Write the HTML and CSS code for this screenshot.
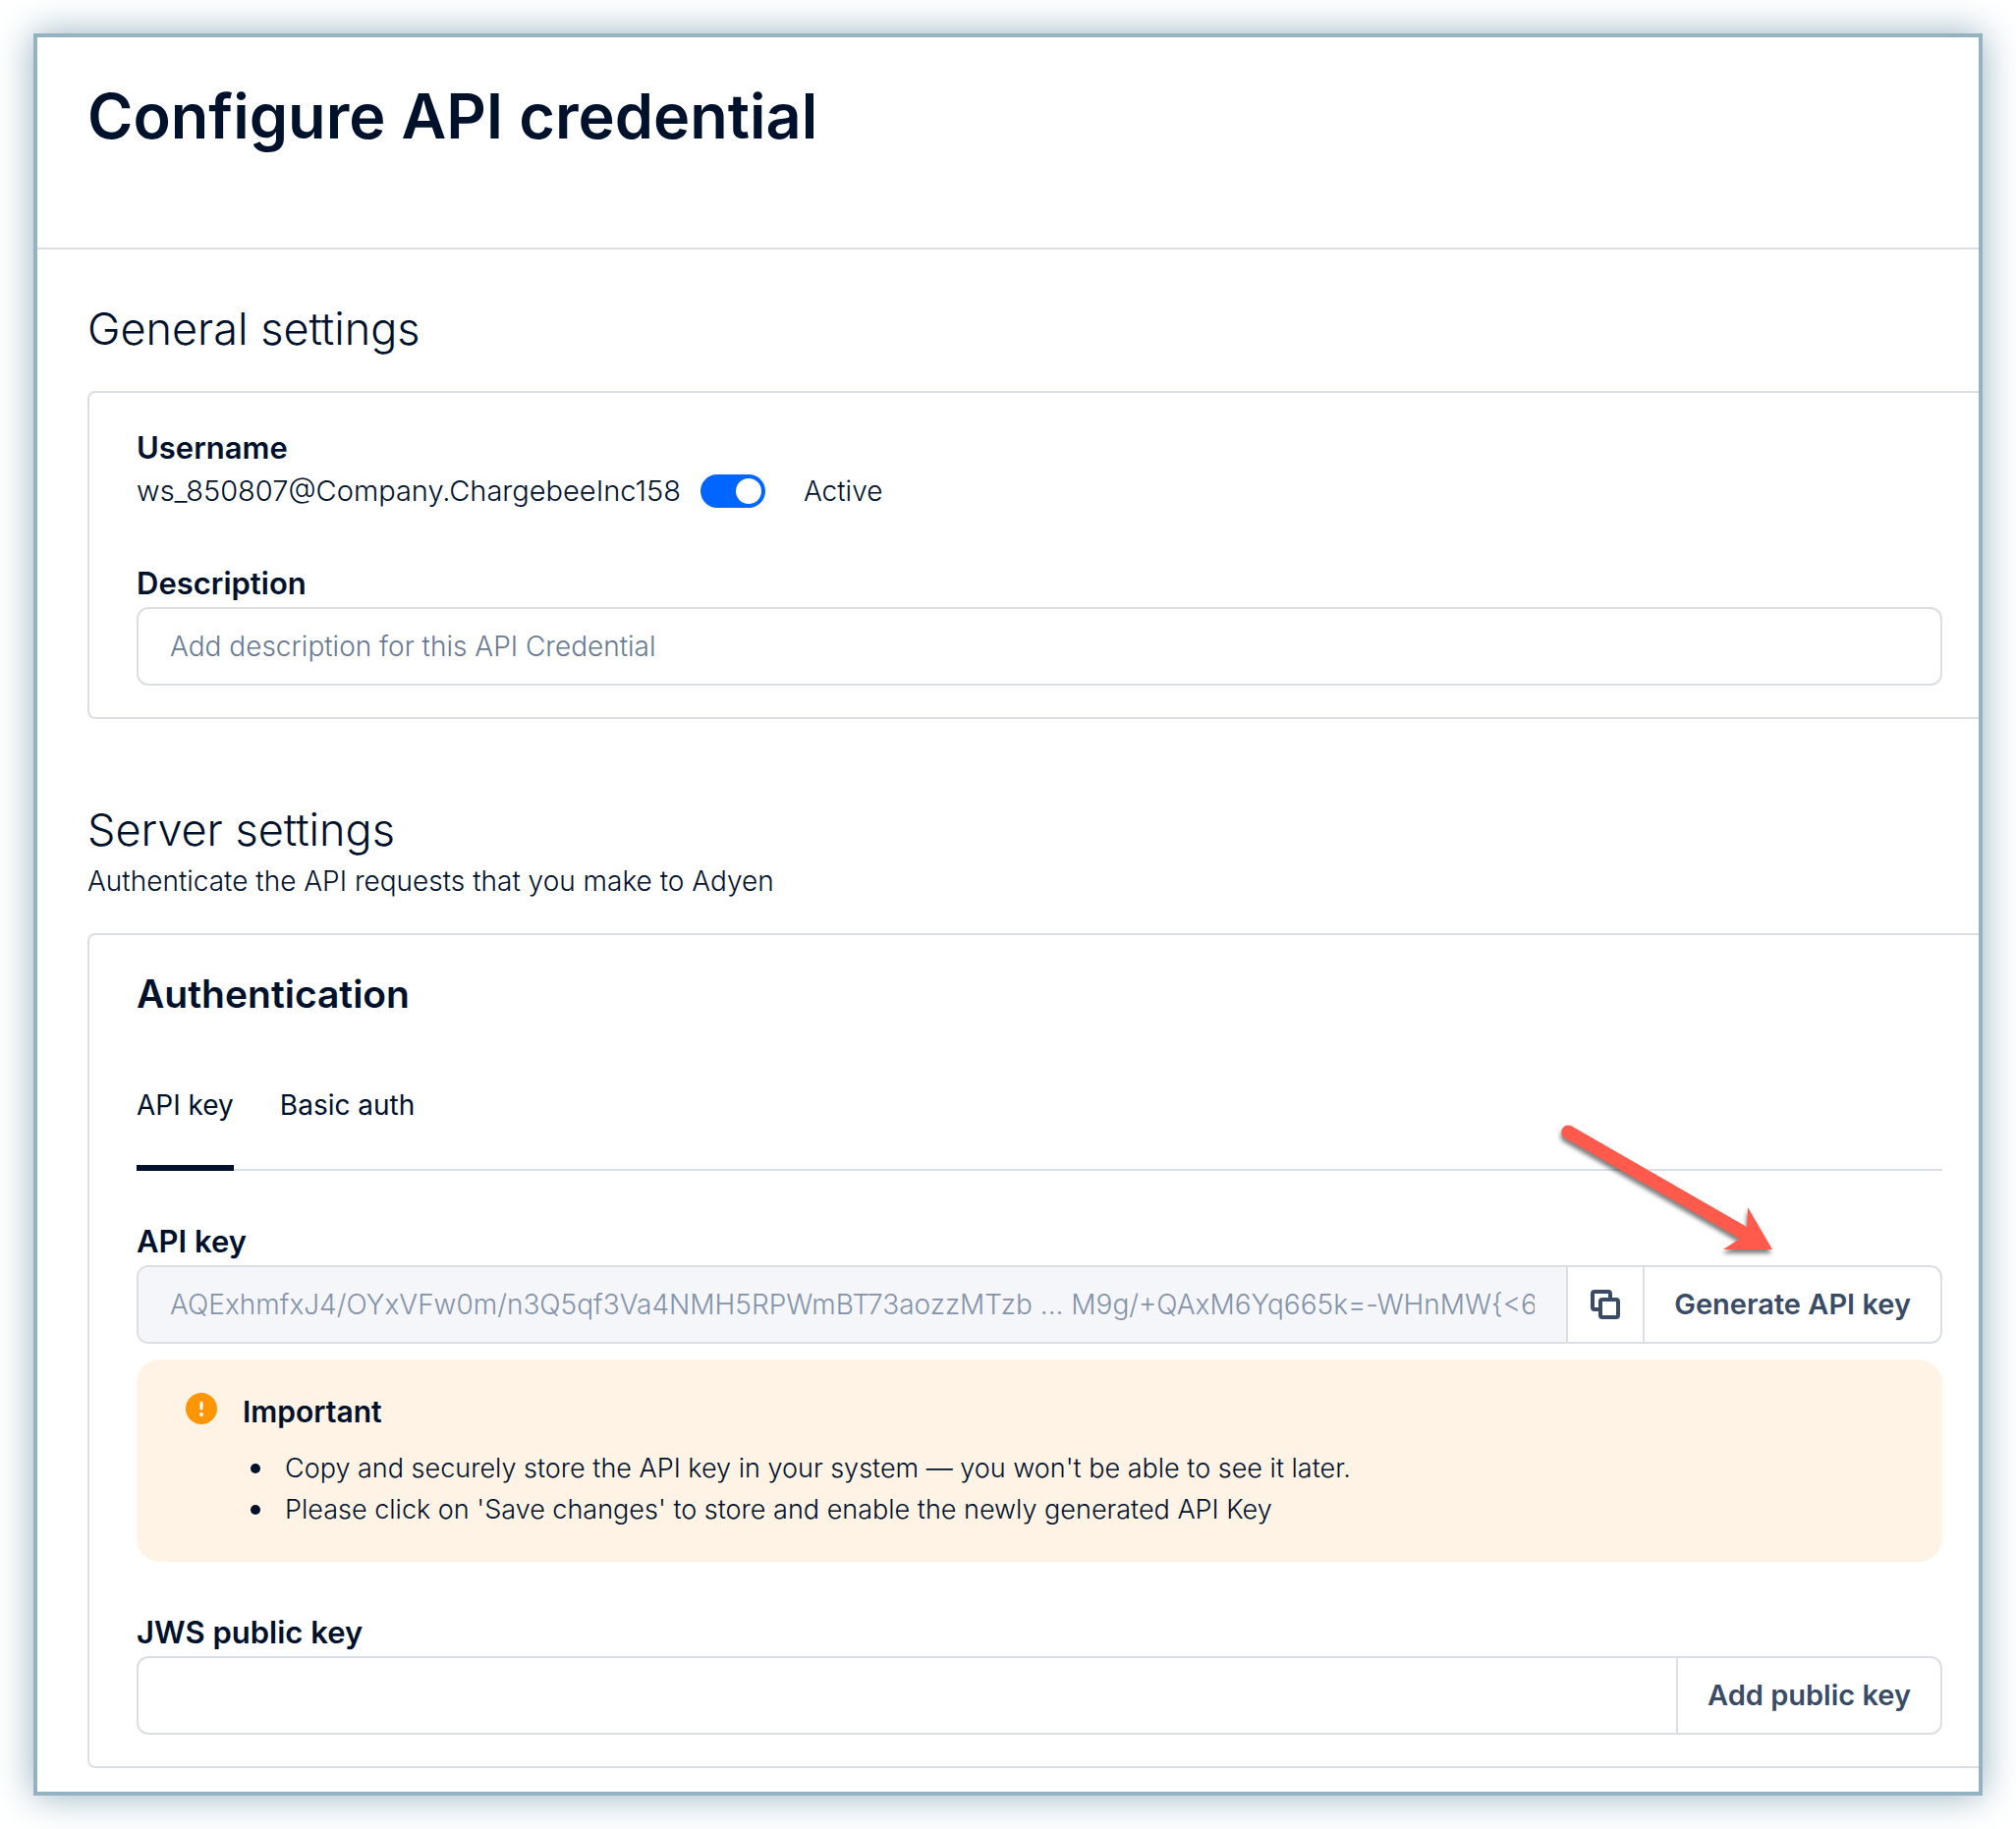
FILE: index.html
```html
<!DOCTYPE html>
<html lang="en">
<head>
  <meta charset="UTF-8" />
  <meta name="viewport" content="width=device-width, initial-scale=1.0"/>
  <title>Configure API credential</title>
  <link rel="stylesheet" href="styles.css">
</head>
<body>

  <main class="window">
    <header class="page-header">
      <h1>Configure API credential</h1>
    </header>

    <section class="section general">
      <h2>General settings</h2>
      <div class="card">
        <div class="field">
          <div class="label">Username</div>
          <div class="user-row">
            <span class="username">ws_850807@Company.ChargebeeInc158</span>
            <input type="checkbox" role="switch" id="active" class="toggle" checked />
            <label for="active" class="toggle-label">Active</label>
          </div>
        </div>
        <div class="field">
          <label class="label" for="description">Description</label>
          <div class="input-group">
            <input type="text" id="description" placeholder="Add description for this API Credential" />
          </div>
        </div>
      </div>
    </section>

    <section class="section server">
      <h2>Server settings</h2>
      <p class="subtitle">Authenticate the API requests that you make to Adyen</p>
      <div class="card">
        <h3>Authentication</h3>
        <div class="tabs" role="tablist">
          <button type="button" class="tab selected" role="tab" aria-selected="true">API key</button>
          <button type="button" class="tab" role="tab" aria-selected="false">Basic auth</button>
        </div>

        <div class="field">
          <label class="label" for="apiKey">API key</label>
          <div class="input-group">
            <input type="text" id="apiKey" class="key" value="AQExhmfxJ4/OYxVFw0m/n3Q5qf3Va4NMH5RPWmBT73aozzMTzb ... M9g/+QAxM6Yq665k=-WHnMW{&lt;6" readonly />
            <button type="button" class="copy-btn" aria-label="Copy">
              <svg width="30" height="30" viewBox="0 0 30 30" fill="none" stroke="currentColor" stroke-width="4">
                <path d="M9 20H4a2 2 0 0 1-2-2V4a2 2 0 0 1 2-2h14a2 2 0 0 1 2 2v5"/>
                <rect x="10" y="10" width="18" height="18" rx="2"/>
              </svg>
            </button>
            <button type="button">Generate API key</button>
          </div>
          <svg class="arrow" width="240" height="150" viewBox="0 0 240 150">
            <path d="M12 18A7 7 0 0 1 19 6L198 109L199 89L224 132H174L191 121Z" fill="#ff5a4b"/>
          </svg>
        </div>

        <div class="alert">
          <svg class="alert-icon" width="34" height="34" viewBox="0 0 34 34">
            <circle cx="17" cy="18" r="16" fill="#ff9500"/>
            <path d="M17 12v6" stroke="#fff" stroke-width="3" stroke-linecap="round"/>
            <circle cx="17" cy="24" r="2" fill="#fff"/>
          </svg>
          <div>
            <strong>Important</strong>
            <ul>
              <li>Copy and securely store the API key in your system — you won't be able to see it later.</li>
              <li>Please click on 'Save changes' to store and enable the newly generated API Key</li>
            </ul>
          </div>
        </div>

        <div class="field">
          <label class="label" for="jwsKey">JWS public key</label>
          <div class="input-group">
            <input type="text" id="jwsKey" />
            <button type="button">Add public key</button>
          </div>
        </div>
      </div>
    </section>
  </main>

</body>
</html>
```

FILE: styles.css
```css
* {
  box-sizing: border-box;
}
body {
  margin: 0;
  padding: 34px;
  background: #fff;
  color: #00112c;
  font-family: Inter, "Liberation Sans", sans-serif;
  font-size: 28px;
  font-weight: 300;
  line-height: 42px;
}
h1, h2, h3, p, ul {
  margin: 0;
}
h1 {
  font-size: 63px;
  font-weight: 600;
  line-height: 72px;
}
h2 {
  font-size: 45px;
  font-weight: 300;
  line-height: 56px;
}
h3 {
  font-size: 39px;
  font-weight: 600;
  line-height: 52px;
}
button, input {
  font: inherit;
  color: inherit;
}
button {
  background: none;
  border: none;
  cursor: pointer;
}

.window {
  border: 4px solid #95b2c1;
  box-shadow: 0 0 36px #94b1be;
  padding-bottom: 24px;
  background: #fff;
}
.page-header {
  padding: 44px 51px 98px;
  border-bottom: 2px solid #dbdfe4;
}
.section {
  padding-left: 51px;
}
.general {
  padding-top: 53px;
}
.server {
  padding-top: 85px;
}
.subtitle {
  padding-top: 3px;
}

/* cards run off the right side of the window */
.card {
  margin-top: 32px;
  padding: 34px 37px 32px 48px;
  border: 2px solid #dbdfe4;
  border-right: none;
  border-radius: 8px 0 0 8px;
}
.general .card {
  margin-top: 35px;
}
.field {
  position: relative;
}
.field + .field {
  margin-top: 52px;
}
.label {
  display: block;
  margin-bottom: 2px;
  font-size: 31px;
  font-weight: 600;
  line-height: 44px;
}

.user-row {
  display: flex;
  align-items: center;
  height: 40px;
}
.username {
  font-size: 29px;
}
.toggle {
  appearance: none;
  width: 66px;
  height: 34px;
  margin: 0 39px 0 20px;
  padding: 4px;
  border-radius: 17px;
  background: #c3cad4;
}
.toggle::before {
  content: "";
  display: block;
  width: 26px;
  height: 26px;
  border-radius: 50%;
  background: #fff;
}
.toggle:checked {
  background: #0066ff;
}
.toggle:checked::before {
  margin-left: auto;
}

.input-group {
  display: flex;
  height: 80px;
  border: 2px solid #dbdfe4;
  border-radius: 12px;
  overflow: hidden;
}
.input-group input {
  flex: 1;
  min-width: 0;
  margin: 0 32px;
  padding: 0;
  border: none;
  outline: none;
  background: none;
}
.input-group input::placeholder {
  color: #687a92;
  opacity: 1;
}
.input-group .key {
  margin: 0;
  padding: 0 32px;
  background: #f4f6fa;
  color: #8493a7;
}
.input-group button {
  padding: 0 30px;
  border-left: 2px solid #dbdfe4;
  color: #3a4b66;
  font-size: 29px;
  font-weight: 600;
}
.input-group .copy-btn {
  display: flex;
  align-items: center;
  padding: 0 23px;
}

.tabs {
  display: flex;
  gap: 47px;
  margin: 66px 0 50px;
  box-shadow: inset 0 -2px #dbdfe4;
}
.tab {
  padding: 0 0 40px;
  border-bottom: 6px solid transparent;
  font-weight: 400;
}
.tab.selected {
  border-color: #00112c;
}

.alert {
  display: flex;
  gap: 25px;
  margin: 16px 0 50px;
  padding: 32px 49px;
  border-radius: 24px;
  background: #fff3e5;
}
.alert-icon {
  flex: none;
}
.alert strong {
  display: block;
  margin-bottom: 16px;
  font-size: 30px;
  font-weight: 600;
}
.alert ul {
  padding-left: 8px;
  font-size: 27px;
  list-style: none;
}
.alert li {
  display: flex;
  align-items: center;
  gap: 25px;
}
.alert li::before {
  content: "";
  flex: none;
  width: 10px;
  height: 10px;
  border-radius: 50%;
  background: #00112c;
}

/* pointer to the generate button, drawn over the form */
.arrow {
  position: absolute;
  top: -102px;
  right: 157px;
  filter: drop-shadow(-1px 4px 2px rgba(0, 0, 0, 0.5));
  pointer-events: none;
}
```
